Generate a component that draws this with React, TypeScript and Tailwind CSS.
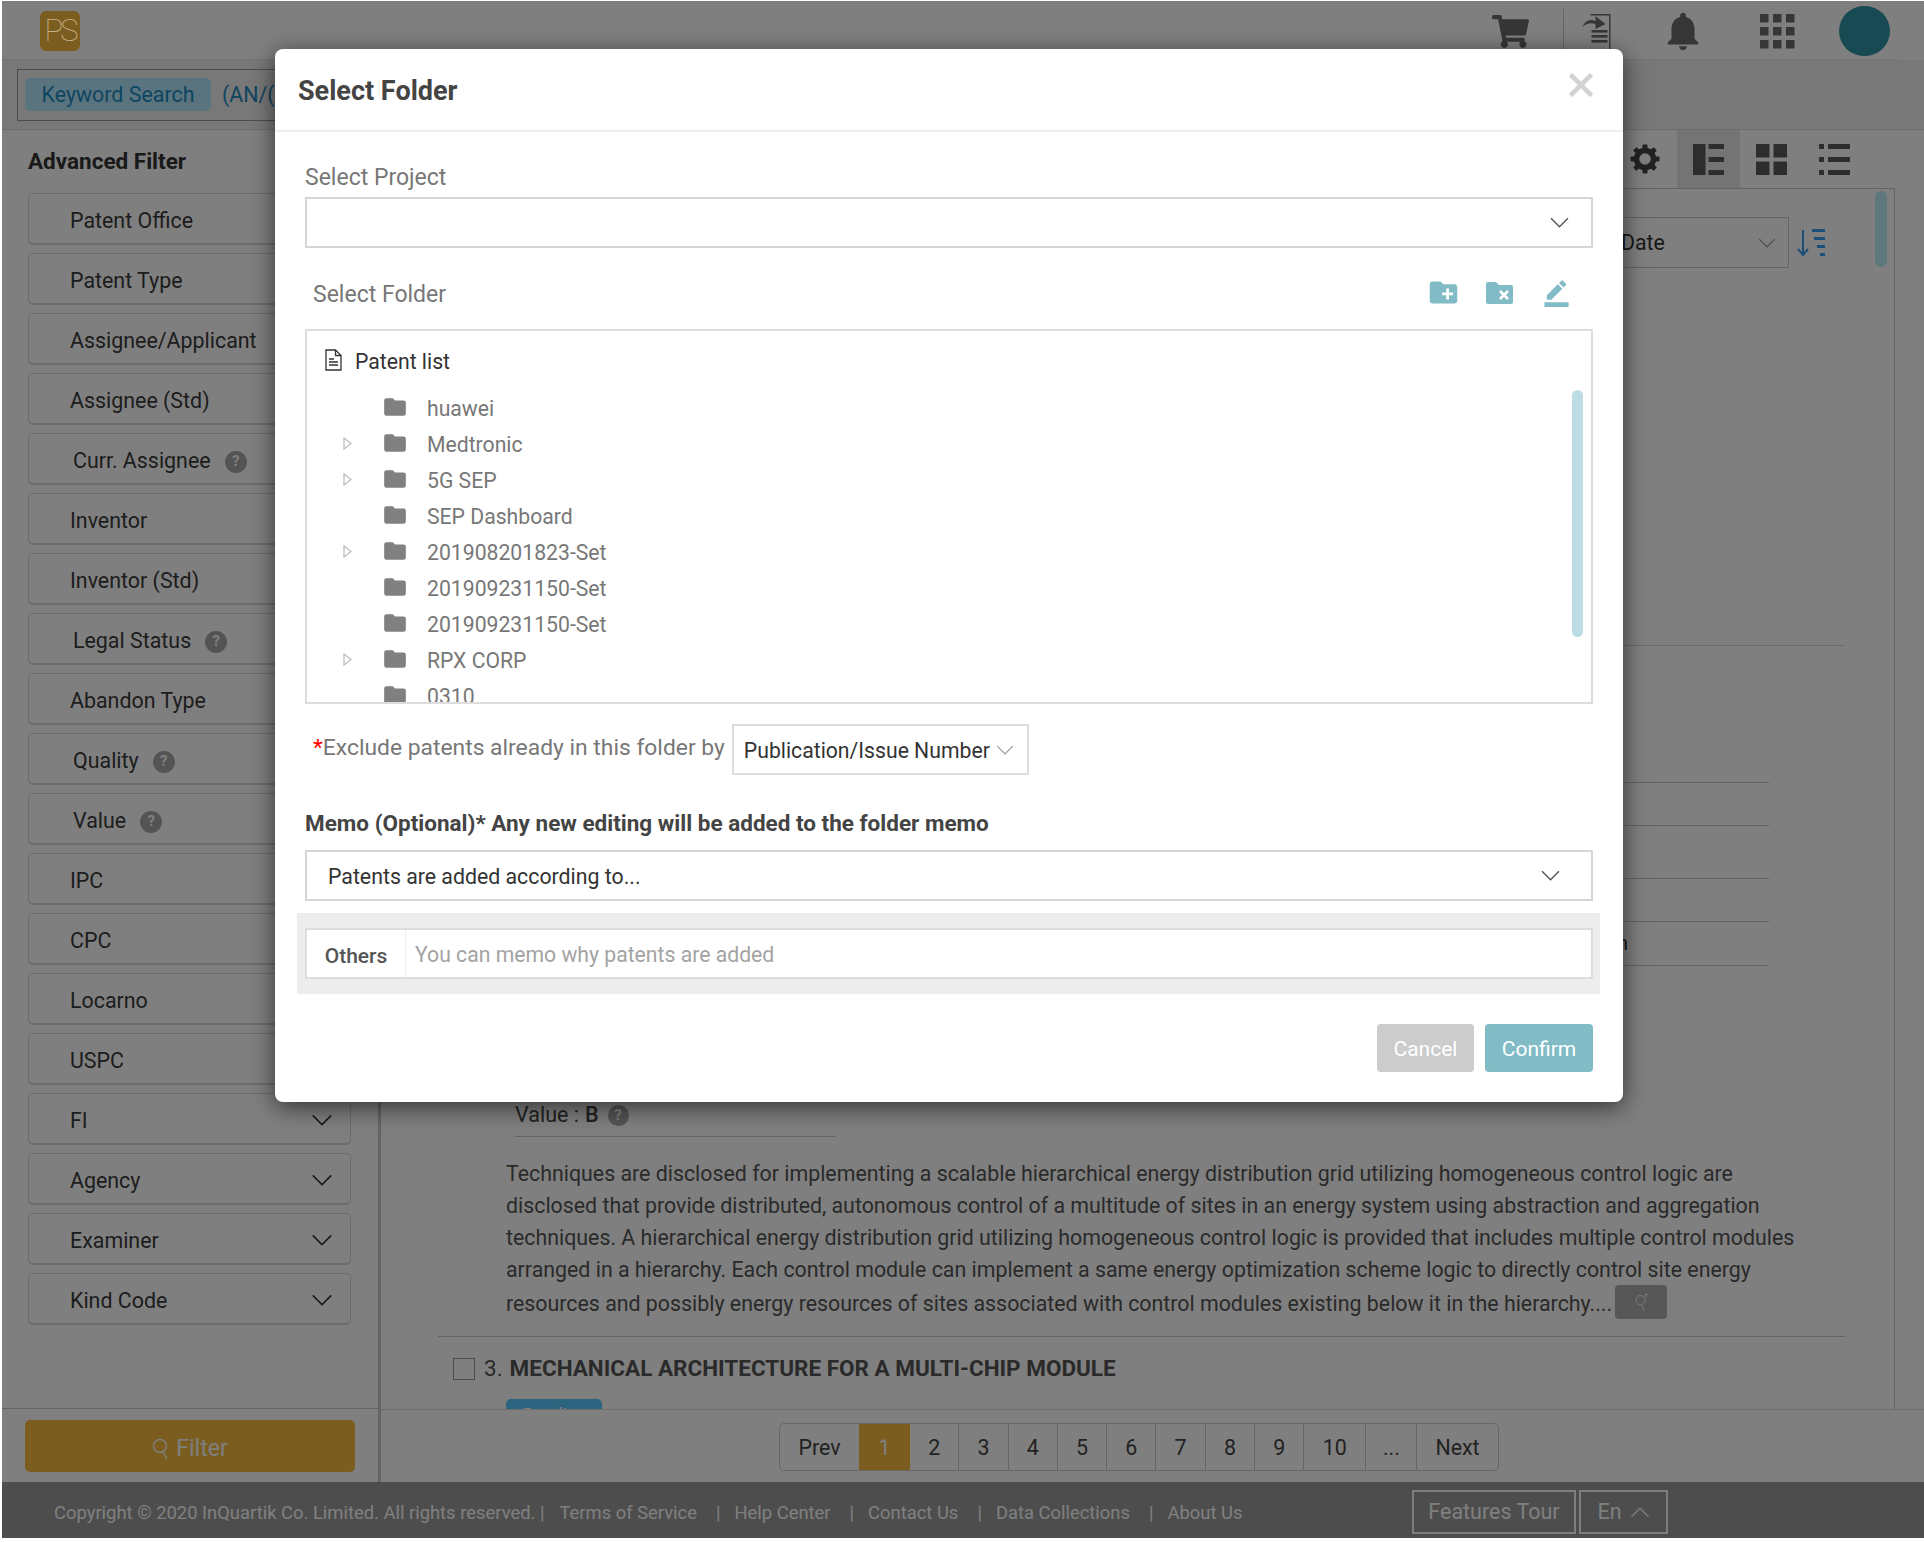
import React from 'react';
import { FaShoppingCart } from 'react-icons/fa';
import { MdNotifications, MdFolder, MdCreateNewFolder, MdBorderColor } from 'react-icons/md';

const filters: { name: string; help?: boolean }[] = [
  { name: 'Patent Office' },
  { name: 'Patent Type' },
  { name: 'Assignee/Applicant' },
  { name: 'Assignee (Std)' },
  { name: 'Curr. Assignee', help: true },
  { name: 'Inventor' },
  { name: 'Inventor (Std)' },
  { name: 'Legal Status', help: true },
  { name: 'Abandon Type' },
  { name: 'Quality', help: true },
  { name: 'Value', help: true },
  { name: 'IPC' },
  { name: 'CPC' },
  { name: 'Locarno' },
  { name: 'USPC' },
  { name: 'FI' },
  { name: 'Agency' },
  { name: 'Examiner' },
  { name: 'Kind Code' },
];

const folders = [
  { name: 'huawei' },
  { name: 'Medtronic', arrow: true },
  { name: '5G SEP', arrow: true },
  { name: 'SEP Dashboard' },
  { name: '201908201823-Set', arrow: true },
  { name: '201909231150-Set' },
  { name: '201909231150-Set' },
  { name: 'RPX CORP', arrow: true },
  { name: '0310' },
];

const abstractLines = [
  'Techniques are disclosed for implementing a scalable hierarchical energy distribution grid utilizing homogeneous control logic are',
  'disclosed that provide distributed, autonomous control of a multitude of sites in an energy system using abstraction and aggregation',
  'techniques. A hierarchical energy distribution grid utilizing homogeneous control logic is provided that includes multiple control modules',
  'arranged in a hierarchy. Each control module can implement a same energy optimization scheme logic to directly control site energy',
];

const pages = ['2', '3', '4', '5', '6', '7', '8', '9'];
const metaRows = [137, 43, 53, 43];

function Chevron({ className }: { className?: string }) {
  return (
    <svg viewBox="0 0 22 13" fill="none" stroke="currentColor" strokeWidth="1.6" className={className}>
      <path d="M1 1.5 L11 11.5 L21 1.5" />
    </svg>
  );
}

function HelpDot() {
  return (
    <span className="ml-[14px] flex h-[22px] w-[22px] items-center justify-center rounded-full bg-[#a8a8a8] text-[15px] font-bold text-white">?</span>
  );
}

function ExportIcon() {
  return (
    <svg viewBox="0 0 28 36" className="h-[36px] w-[29px] text-[#6c6c6c]" fill="currentColor">
      <path d="M8 1 H28 V36 H26.6 V2.4 H8 Z" />
      <path d="M0 14 C3 7 8 6 13 8 V3 L23 11 L13 16 V11 C8 9.500 4 10 0 14 Z" />
      <rect x="9" y="17" width="16" height="2.600" />
      <rect x="9" y="22" width="16" height="2.600" />
      <rect x="9" y="27" width="16" height="2.600" />
    </svg>
  );
}

function AppsIcon() {
  return (
    <svg viewBox="0 0 35 35" className="h-[35px] w-[35px] text-[#6c6c6c]" fill="currentColor">
      {[0, 13, 26].map((y) =>
        [0, 13, 26].map((x) => <rect key={`${x}-${y}`} x={x} y={y} width="8.500" height="8.500" />),
      )}
    </svg>
  );
}

function GearIcon() {
  return (
    <svg viewBox="0 0 30 30" className="h-[30px] w-[30px] text-[#444]" fill="none" stroke="currentColor">
      <circle cx="15" cy="15" r="8.500" strokeWidth="5.500" />
      {[0, 45, 90, 135, 180, 225, 270, 315].map((a) => (
        <rect key={a} x="12.500" y="0.500" width="5" height="5" rx="1" fill="currentColor" stroke="none" transform={`rotate(${a} 15 15)`} />
      ))}
    </svg>
  );
}

function SplitIcon() {
  return (
    <svg viewBox="0 0 31 31" className="h-[31px] w-[31px] text-[#5a5a5a]" fill="currentColor">
      <rect x="0" y="0" width="12.500" height="31" />
      <rect x="15.500" y="0" width="15.500" height="5" />
      <rect x="15.500" y="13" width="15.500" height="5" />
      <rect x="15.500" y="26" width="15.500" height="5" />
    </svg>
  );
}

function TilesIcon() {
  return (
    <svg viewBox="0 0 31 31" className="h-[31px] w-[31px] text-[#5a5a5a]" fill="currentColor">
      <rect x="0" y="0" width="13.500" height="13.500" />
      <rect x="17.500" y="0" width="13.500" height="13.500" />
      <rect x="0" y="17.500" width="13.500" height="13.500" />
      <rect x="17.500" y="17.500" width="13.500" height="13.500" />
    </svg>
  );
}

function RowsIcon() {
  return (
    <svg viewBox="0 0 31 31" className="h-[31px] w-[31px] text-[#5a5a5a]" fill="currentColor">
      {[0, 13, 26].map((y) => (
        <g key={y}>
          <rect x="0" y={y} width="5" height="5" />
          <rect x="9" y={y} width="22" height="5" />
        </g>
      ))}
    </svg>
  );
}

function SortIcon() {
  return (
    <svg viewBox="0 0 28 28" className="h-[28px] w-[28px] text-[#3a9cf0]" fill="none" stroke="currentColor">
      <path d="M6 1 V26 M1 20 L6 26 L11 20" strokeWidth="2" />
      <path d="M15 1.500 H28 M17 9.500 H28 M20 17.500 H28 M23 25.500 H28" strokeWidth="3" />
    </svg>
  );
}

function FolderXIcon() {
  return (
    <svg viewBox="0 0 27 22" className="h-[22px] w-[27px] text-[#81bcc6]" fill="currentColor">
      <path d="M2 0 H10 L13 3 H25 A2 2 0 0 1 27 5 V20 A2 2 0 0 1 25 22 H2 A2 2 0 0 1 0 20 V2 A2 2 0 0 1 2 0 Z" />
      <path d="M14 9 L22 17 M22 9 L14 17" stroke="#fff" strokeWidth="2.600" fill="none" />
    </svg>
  );
}

function DocIcon() {
  return (
    <svg viewBox="0 0 17 22" className="h-[22px] w-[17px] text-[#333]" fill="none" stroke="currentColor" strokeWidth="1.300">
      <path d="M1 1 H10.500 L16 6.500 V21 H1 Z" />
      <path d="M10.500 1 V6.500 H16" />
      <path d="M4 10 H9 M4 13 H13 M4 16 H13" />
    </svg>
  );
}

function TreeArrow() {
  return (
    <svg viewBox="0 0 9 13" className="h-[13px] w-[9px]" fill="none" stroke="#bdbdbd" strokeWidth="1.300">
      <path d="M1 1 L8 6.500 L1 12 Z" />
    </svg>
  );
}

function FilterItem({ name, help }: { name: string; help?: boolean }) {
  return (
    <div className={`flex h-[52px] w-[323px] items-center rounded-[5px] border border-b-2 border-[#d8d8d8] bg-white pr-[17px] text-[21.400px] text-[#3a3a3a] ${help ? 'pl-[44px]' : 'pl-[41px]'}`}>
      <span className="pt-[5px]">{name}</span>
      {help && <span className="mt-[6px]"><HelpDot /></span>}
      <Chevron className="ml-auto mt-[2px] h-[12px] w-[22px] text-[#333]" />
    </div>
  );
}

function SelectFolderModal() {
  return (
    <div className="absolute left-[273px] top-[48px] z-20 h-[1053px] w-[1348px] rounded-[8px] bg-white shadow-[0_5px_25px_rgba(0,0,0,0.6)]">
      <div className="relative flex h-[83px] items-center border-b-2 border-[#eeeeee] pl-[23px]">
        <h2 className="pt-[4px] text-[27px] font-bold text-[#444]">Select Folder</h2>
        <svg viewBox="0 0 24 24" className="absolute right-[30px] top-[24px] h-[24px] w-[24px]" fill="none" stroke="#d2d2d2" strokeWidth="4.500">
          <path d="M1.500 1.500 L22.500 22.500 M22.500 1.500 L1.500 22.500" />
        </svg>
      </div>

      <div className="px-[30px]">
        <div className="pb-[7px] pt-[34px] text-[23px] leading-[24px] text-[#777]">Select Project</div>
        <div className="flex h-[51px] items-center justify-end border-2 border-[#d6d6d6] pr-[21px]">
          <Chevron className="h-[11px] w-[21px] text-[#555]" />
        </div>

        <div className="flex h-[81px] items-start pl-[8px] pt-[34px]">
          <span className="text-[23px] leading-[26px] text-[#777]">Select Folder</span>
          <div className="ml-auto -mt-[6px] mr-[22px] flex items-center gap-[29px] text-[#81bcc6]">
            <MdCreateNewFolder size={33} className="-mx-[3px]" />
            <FolderXIcon />
            <MdBorderColor size={29} className="-mt-[1px]" />
          </div>
        </div>

        <div className="relative h-[375px] overflow-hidden border-2 border-[#dddddd]">
          <div className="flex h-[58px] items-center pl-[18px] text-[21.200px] text-[#333]">
            <DocIcon />
            <span className="ml-[13px] pt-[4px]">Patent list</span>
          </div>
          {folders.map((f, i) => (
            <div key={i} className="flex h-[36px] items-center pl-[36px] text-[21.200px] text-[#777]">
              <span className="flex w-[39px] items-center">{f.arrow && <TreeArrow />}</span>
              <MdFolder size={26} className="text-[#808080]" />
              <span className="ml-[19px] pt-[4px]">{f.name}</span>
            </div>
          ))}
          <div className="absolute right-[8px] top-[59px] h-[247px] w-[11px] rounded-full bg-[#bcdde5]" />
        </div>

        <div className="flex h-[71px] items-start pl-[8px] pt-[20px]">
          <span className="mt-[11px] text-[22.850px] leading-[26px] text-[#777]"><span className="text-[#f00]">*</span>Exclude patents already in this folder by</span>
          <div className="ml-[7px] flex h-[51px] w-[297px] items-center border-2 border-[#dddddd] pl-[10px] text-[21.200px] text-[#333]">
            <span className="pt-[2px]">Publication/Issue Number</span>
            <Chevron className="ml-[6px] h-[10px] w-[18px] text-[#999]" />
          </div>
        </div>

        <div className="h-[75px] pt-[35px] text-[22.500px] font-bold leading-[26px] text-[#444]">Memo (Optional)* Any new editing will be added to the folder memo</div>
        <div className="flex h-[51px] items-center border-2 border-[#d6d6d6] pl-[21px] pr-[30px] text-[21.300px] text-[#333]">
          <span className="pt-[2px]">Patents are added according to...</span>
          <Chevron className="ml-auto h-[11px] w-[21px] text-[#555]" />
        </div>

        <div className="-ml-[8px] -mr-[7px] mt-[12px] h-[81px] bg-[#ededed] pl-[8px] pr-[7px] pt-[15px]">
          <div className="flex h-[51px] items-center border-2 border-[#dddddd] bg-white">
            <div className="flex h-full w-[99px] items-center justify-center border-r border-[#eeeeee] pt-[7px] text-[21px] font-medium text-[#555]">Others</div>
            <span className="pl-[9px] pt-[3px] text-[21.200px] text-[#a3a3a3]">You can memo why patents are added</span>
          </div>
        </div>

        <div className="mt-[30px] flex justify-end gap-[11px]">
          <button className="h-[48px] w-[97px] rounded-[4px] bg-[#cccccc] pt-[4px] text-[21px] text-white">Cancel</button>
          <button className="h-[48px] w-[108px] rounded-[4px] bg-[#81bcc6] pt-[4px] text-[21px] text-white">Confirm</button>
        </div>
      </div>
    </div>
  );
}

export default function App() {
  return (
    <div className="h-[1542px] w-[1924px] overflow-hidden bg-white pb-[4px] pl-[2px] pt-[1px] font-[family-name:Roboto,sans-serif]">
      <div className="relative flex h-full flex-col overflow-hidden bg-white">
        {/* top bar */}
        <header className="mr-[27px] flex h-[59px] shrink-0 items-center border-b border-[#e5e5e5] pl-[38px] pt-[2px]">
          <div className="flex h-[40px] w-[40px] items-center justify-center rounded-[6px] bg-[#f6bc3e]">
            <span className="relative z-10 text-[31px] font-thin leading-[38px] tracking-[-3px] text-[#c9b48a]">PS</span>
          </div>
          <div className="ml-auto flex items-center">
            <FaShoppingCart className="text-[#6c6c6c]" size={37} />
            <div className="ml-[34px] h-[44px] w-px bg-[#cccccc]" />
            <div className="ml-[18px]"><ExportIcon /></div>
            <MdNotifications size={46} className="ml-[49px] text-[#6c6c6c]" />
            <div className="ml-[54px]"><AppsIcon /></div>
            <div className="ml-[44px] mr-[7px] h-[50px] w-[51px] rounded-full bg-[#2e94a4]" />
          </div>
        </header>

        {/* search */}
        <div className="flex h-[69px] shrink-0 items-center bg-[#f0f0f0] pl-[15px]">
          <div className="flex h-[52px] w-[1400px] items-center border border-[#999] pl-[7px] text-[21.400px] text-[#1c8ac0]">
            <span className="flex h-[33px] w-[186px] items-center justify-center rounded-[5px] bg-[#b4e8ff] pt-[2px]">Keyword Search</span>
            <span className="ml-[11px] pt-[2px]">(AN/(</span>
          </div>
        </div>

        <div className="flex min-h-0 flex-1 border-t border-[#dddddd]">
          {/* sidebar */}
          <aside className="flex w-[379px] shrink-0 flex-col border-r-[3px] border-[#c8c8c8]">
            <div className="flex-1 pl-[26px]">
              <h3 className="h-[63px] pt-[18px] text-[22.500px] font-bold leading-[26px] text-[#333]">Advanced Filter</h3>
              <div className="flex flex-col gap-[8px]">
                {filters.map((f) => (
                  <FilterItem key={f.name} name={f.name} help={f.help} />
                ))}
              </div>
            </div>
            <div className="h-[74px] border-t border-[#c8c8c8] pl-[23px] pt-[11px]">
              <button className="flex h-[52px] w-[330px] items-center justify-center gap-[6px] rounded-[5px] bg-[#f6bc3e] text-[23px] text-white">
                <svg viewBox="0 0 18 22" className="mt-[6px] h-[22px] w-[18px]" fill="none" stroke="currentColor" strokeWidth="1.400">
                  <circle cx="8" cy="8" r="6.500" />
                  <path d="M11 14 L15 21" />
                </svg>
                <span className="pt-[6px]">Filter</span>
              </button>
            </div>
          </aside>

          {/* results */}
          <main className="flex min-w-0 flex-1 flex-col">
            <div className="flex h-[58px] shrink-0 items-stretch pl-[1248px]">
              <div className="flex w-[48px] items-center pl-[1px]">
                <GearIcon />
              </div>
              <div className="flex w-[63px] items-center justify-center bg-[#e8e8e8]"><SplitIcon /></div>
              <div className="flex w-[63px] items-center justify-center"><TilesIcon /></div>
              <div className="flex w-[62px] items-center justify-center"><RowsIcon /></div>
            </div>

            <div className="relative mr-[29px] min-h-0 flex-1 overflow-hidden border-r border-t border-[#c8c8c8] pt-[28px]">
              <div className="absolute right-[7px] top-[2px] h-[76px] w-[12px] rounded-full bg-[#bcf0fa]" />

              <div className="flex items-center pl-[1100px]">
                <div className="flex h-[51px] w-[308px] items-center border border-[#c8c8c8] pl-[139px] pr-[12px] text-[21.300px] text-[#333]">
                  <span>Date</span>
                  <Chevron className="ml-auto h-[10px] w-[18px] text-[#999]" />
                </div>
                <div className="ml-[8px]"><SortIcon /></div>
              </div>

              <div className="mr-[49px] h-[378px] border-b border-[#d6d6d6]" />
              <div className="ml-[134px] mr-[125px]">
                {metaRows.map((h, i) => (
                  <div key={i} className="border-b border-[#c8c8c8]" style={{ height: h }} />
                ))}
                <div className="flex h-[44px] items-center justify-end border-b border-[#c8c8c8] pr-[141px] text-[21px] text-[#333]">Application</div>
              </div>

              <div className="ml-[134px] mt-[131px] flex h-[40px] w-[321px] items-center border-b border-[#c8c8c8] pb-[3px] text-[21.500px] text-[#444]">
                Value : <span className="ml-[6px] font-medium">B</span>
                <span className="ml-[9px] flex h-[21px] w-[21px] items-center justify-center rounded-full bg-[#a8a8a8] text-[15px] font-bold text-white">?</span>
              </div>

              <div className="ml-[125px] mt-[21px] whitespace-nowrap text-[21.350px] leading-[32px] text-[#555]">
                {abstractLines.map((line) => (
                  <div key={line}>{line}</div>
                ))}
                <div className="mt-[2px] flex h-[32px] items-center">
                  <span>resources and possibly energy resources of sites associated with control modules existing below it in the hierarchy....</span>
                  <span className="ml-[3px] -mt-[4px] flex h-[34px] w-[52px] items-center justify-center rounded-[4px] bg-[#aeaeae]">
                    <svg viewBox="0 0 16 22" className="h-[20px] w-[15px]" fill="none" stroke="#e8e8e8" strokeWidth="1.200">
                      <circle cx="7" cy="9" r="5" />
                      <path d="M8 14 L11 21 M13 1 V5 M11 3 H15" />
                    </svg>
                  </span>
                </div>
              </div>

              <div className="ml-[57px] mr-[49px] mt-[16px] border-t border-[#c8c8c8]" />
              <div className="ml-[72px] mt-[19px] flex h-[26px] items-center text-[22.500px] text-[#555]">
                <span className="h-[22px] w-[22px] border border-[#999] bg-white" />
                <span className="ml-[9px]">3.</span>
                <span className="ml-[7px] font-bold">MECHANICAL ARCHITECTURE FOR A MULTI-CHIP MODULE</span>
              </div>
              <div className="ml-[125px] mt-[17px] h-[30px] w-[96px] rounded-[5px] bg-[#58c8ff] pl-[16px] pt-[2px] text-[18px] text-white">Pending</div>
            </div>

            <div className="flex h-[73px] shrink-0 items-center border-t border-[#dddddd] pl-[398px] pt-[2px]">
              <div className="flex h-[48px] items-stretch rounded-[5px] border border-[#cccccc] text-[21.400px] text-[#444]">
                <span className="flex w-[79px] items-center justify-center pt-[3px]">Prev</span>
                <span className="flex w-[51px] items-center justify-center bg-[#f6bc3e] pt-[3px] text-white">1</span>
                {pages.map((p) => (
                  <span key={p} className="flex w-[49.300px] items-center justify-center border-r border-[#cccccc] pt-[3px]">{p}</span>
                ))}
                <span className="flex w-[62px] items-center justify-center border-r border-[#cccccc] pt-[3px]">10</span>
                <span className="flex w-[51px] items-center justify-center border-r border-[#cccccc] pt-[3px]">...</span>
                <span className="flex flex-1 items-center justify-center px-[18px] pt-[3px]">Next</span>
              </div>
            </div>
          </main>
        </div>

        {/* footer */}
        <footer className="flex h-[56px] shrink-0 items-center bg-[#9a9a9a] pl-[52px] text-[18.400px] text-white">
          <div className="flex items-center pt-[6px]">
            <span>Copyright © 2020 InQuartik Co. Limited. All rights reserved. |</span>
            <span className="ml-[15px]">Terms of Service</span>
            <span className="ml-[19px]">|</span>
            <span className="ml-[14px]">Help Center</span>
            <span className="ml-[19px]">|</span>
            <span className="ml-[14px]">Contact Us</span>
            <span className="ml-[19px]">|</span>
            <span className="ml-[14px]">Data Collections</span>
            <span className="ml-[19px]">|</span>
            <span className="ml-[14px]">About Us</span>
          </div>
          <div className="ml-auto mr-[256px] mt-[3px] flex gap-[3px]">
            <span className="flex h-[44px] w-[164px] items-center justify-center border-2 border-white pt-[2px] text-[21.500px]">Features Tour</span>
            <span className="flex h-[44px] w-[89px] items-center justify-center gap-[8px] border-2 border-white pt-[2px] text-[21.500px]">
              En
              <Chevron className="h-[11px] w-[20px] rotate-180" />
            </span>
          </div>
        </footer>

        <div className="absolute inset-0 bg-black/50" />
        <SelectFolderModal />
      </div>
    </div>
  );
}
